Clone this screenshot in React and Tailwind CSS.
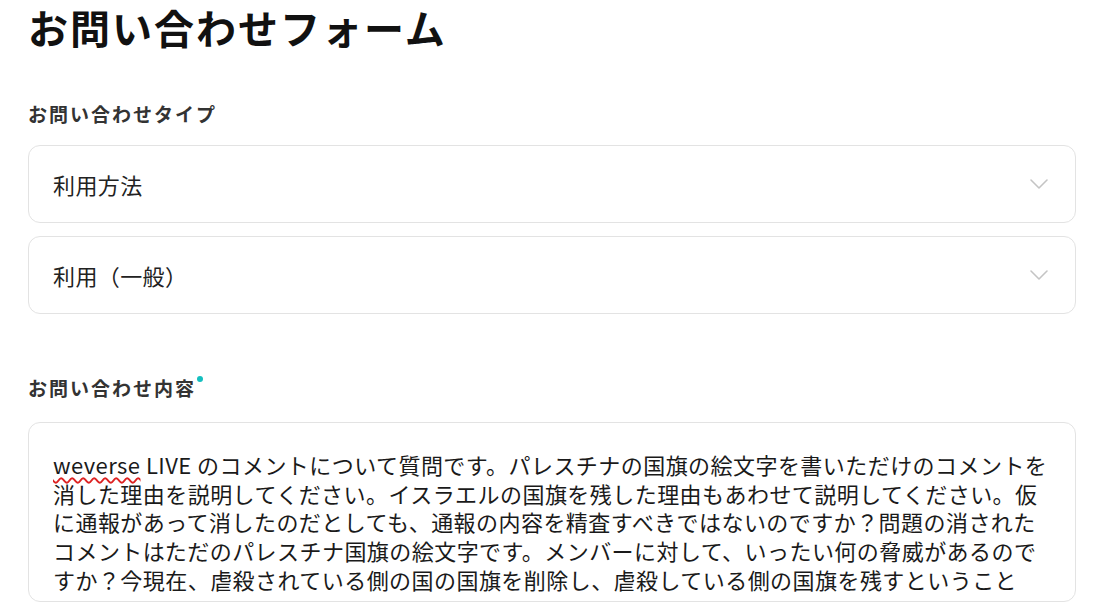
import { useState } from "react";

const lines = [
  "消した理由を説明してください。イスラエルの国旗を残した理由もあわせて説明してください。仮",
  "に通報があって消したのだとしても、通報の内容を精査すべきではないのですか？問題の消された",
  "コメントはただのパレスチナ国旗の絵文字です。メンバーに対して、いったい何の脅威があるので",
  "すか？今現在、虐殺されている側の国の国旗を削除し、虐殺している側の国旗を残すということ",
];

function Chevron() {
  return (
    <svg width="20" height="12" viewBox="0 0 20 12" fill="none" className="shrink-0">
      <path d="M2 2l8 8 8-8" stroke="#c4c4c4" strokeWidth="1.6" strokeLinecap="round" strokeLinejoin="round" />
    </svg>
  );
}

function SelectBox({ value }) {
  return (
    <button
      type="button"
      className="flex h-[78px] w-full items-center justify-between rounded-[12px] border border-[#e3e3e3] bg-white pl-[24px] pr-[26px] text-left"
    >
      <span className="text-[22px] tracking-[0.4px] text-[#222]">{value}</span>
      <Chevron />
    </button>
  );
}

export default function App() {
  const [type] = useState("利用方法");
  const [sub] = useState("利用（一般）");

  return (
    <div
      className="min-h-[613px] bg-white pl-[28px] pr-[17px] text-[#1a1a1a]"
      style={{ fontFamily: '"Noto Sans CJK JP", "Noto Sans", sans-serif' }}
    >
      <h1 className="pt-[3px] text-[40px] font-bold leading-[48px] tracking-[2px] text-[#111]">
        お問い合わせフォーム
      </h1>

      <h2 className="mt-[50px] text-[19px] font-bold leading-[26px] tracking-[2px] text-[#333]">
        お問い合わせタイプ
      </h2>

      <div className="mt-[18px] flex flex-col gap-[13px]">
        <SelectBox value={type} />
        <SelectBox value={sub} />
      </div>

      <h2 className="mt-[61px] flex items-start text-[19px] font-bold leading-[26px] tracking-[2px] text-[#333]">
        お問い合わせ内容
        <span className="ml-[1px] mt-[1px] h-[6px] w-[6px] rounded-full bg-[#14bfbf]" />
      </h2>

      <div className="mt-[21px] h-[180px] overflow-hidden rounded-[12px] border border-[#e3e3e3] bg-white pl-[24px] pt-[27px]">
        <div className="text-[22px] leading-[28.7px] tracking-[0.45px] text-[#1a1a1a]">
          <div className="whitespace-nowrap">
            <span className="underline decoration-[#d22] decoration-wavy decoration-[1.5px] underline-offset-[3px]">weverse</span>
            {" LIVE のコメントについて質問です。パレスチナの国旗の絵文字を書いただけのコメントを"}
          </div>
          {lines.map((l, i) => (
            <div key={i} className="whitespace-nowrap">{l}</div>
          ))}
        </div>
      </div>
    </div>
  );
}
